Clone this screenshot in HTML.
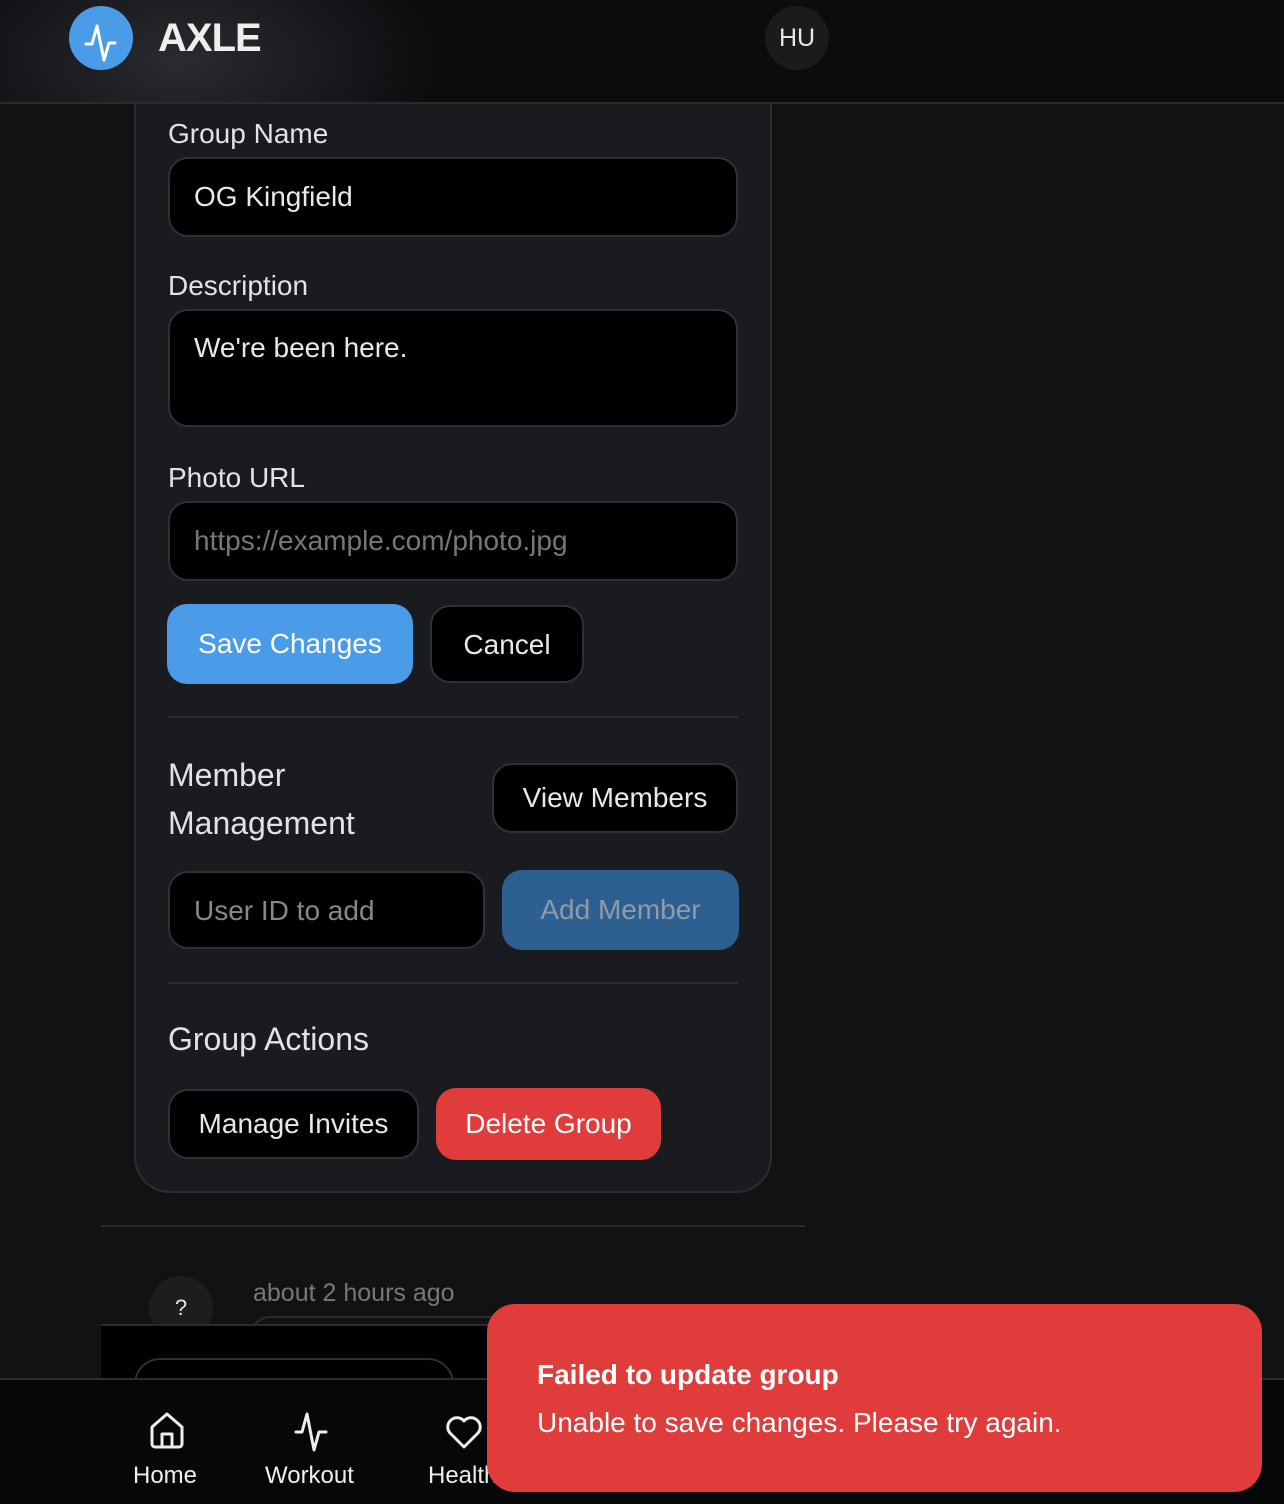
<!DOCTYPE html>
<html><head><style>
*{box-sizing:border-box;margin:0;padding:0}
body{width:1284px;height:1504px;background:#111214;font-family:"Liberation Sans","DejaVu Sans",sans-serif;color:#e8e8ea;position:relative;overflow:hidden}
.hdr{position:absolute;left:0;top:0;width:1284px;height:104px;background:radial-gradient(ellipse 260px 140px at 180px 60px,#2a2b2f,#15161a 70%,#0c0c0d);border-bottom:2px solid #2a2b2e;z-index:5}
.logo{position:absolute;left:69px;top:6px;width:64px;height:64px;border-radius:50%;background:#4a9be8;z-index:6}
.brand{position:absolute;left:158px;top:16px;font-size:40px;font-weight:bold;color:#eee;z-index:6;letter-spacing:-1px}
.hu{position:absolute;left:765px;top:6px;width:64px;height:64px;border-radius:50%;background:#1b1b1d;text-align:center;line-height:64px;font-size:25px;z-index:6}
.card{position:absolute;left:134px;top:60px;width:638px;height:1133px;background:#1a1b1f;border:2px solid #2a2c30;border-radius:36px}
.lbl{position:absolute;left:168px;font-size:28px;color:#e2e2e4}
.inp{position:absolute;left:168px;width:570px;height:80px;background:#000;border:2px solid #2e3238;border-radius:20px;font-size:28px;padding:0 24px;line-height:76px}
.btn{position:absolute;height:80px;border-radius:20px;font-size:28px;text-align:center;line-height:80px}
.hr{position:absolute;left:168px;width:570px;height:2px;background:#2b2d31}
.nav{position:absolute;left:0;top:1378px;width:1284px;height:126px;background:#060708;border-top:2px solid #2a2b2e}
.ni{position:absolute;top:1462px;font-size:24px;color:#eee}
.toast{position:absolute;left:487px;top:1304px;width:775px;height:188px;background:#e03c3c;border-radius:28px;color:#fff;z-index:8}
</style></head><body>
<div class="card"></div>
<div class="hdr"></div>
<div class="logo"><svg width="64" height="64" viewBox="0 0 64 64"><path d="M17 38h6l5-18 7 34 5-17h6" fill="none" stroke="#fff" stroke-width="3" stroke-linecap="round" stroke-linejoin="round"/></svg></div>
<div class="brand">AXLE</div>
<div class="hu">HU</div>
<div class="lbl" style="top:118px">Group Name</div>
<div class="inp" style="top:157px">OG Kingfield</div>
<div class="lbl" style="top:270px">Description</div>
<div class="inp" style="top:309px;height:118px;line-height:74px">We're been here.</div>
<div class="lbl" style="top:462px">Photo URL</div>
<div class="inp" style="top:501px;color:#777">https://example.com/photo.jpg</div>
<div class="btn" style="left:167px;top:604px;width:246px;background:#4a9be8;color:#fff">Save Changes</div>
<div class="btn" style="left:430px;top:605px;width:154px;height:78px;line-height:76px;background:#000;border:2px solid #2e3238">Cancel</div>
<div class="hr" style="top:716px"></div>
<div class="lbl" style="top:751px;font-size:32px;line-height:48px">Member<br>Management</div>
<div class="btn" style="left:492px;top:763px;width:246px;height:70px;line-height:66px;background:#000;border:2px solid #2e3238">View Members</div>
<div class="inp" style="top:871px;width:317px;color:#888;height:78px">User ID to add</div>
<div class="btn" style="left:502px;top:870px;width:237px;background:#2d5f91;color:#8d9bab">Add Member</div>
<div class="hr" style="top:982px"></div>
<div class="lbl" style="top:1021px;font-size:32px">Group Actions</div>
<div class="btn" style="left:168px;top:1089px;width:251px;height:70px;line-height:66px;background:#000;border:2px solid #2e3238">Manage Invites</div>
<div class="btn" style="left:436px;top:1088px;width:225px;height:72px;line-height:72px;background:#e03c3c;color:#fff">Delete Group</div>
<div style="position:absolute;left:101px;top:1225px;width:704px;height:2px;background:#2a2b2e"></div>
<div style="position:absolute;left:149px;top:1276px;width:64px;height:64px;border-radius:50%;background:#1d1d1f;text-align:center;line-height:64px;font-size:22px">?</div>
<div style="position:absolute;left:253px;top:1279px;font-size:25px;color:#777">about 2 hours ago</div>
<div style="position:absolute;left:250px;top:1316px;width:300px;height:20px;border:2px solid #2a2c30;border-bottom:none;border-radius:20px 20px 0 0"></div>
<div style="position:absolute;left:101px;top:1324px;width:704px;height:56px;background:#000;border-top:2px solid #2a2b2e"></div>
<div style="position:absolute;left:134px;top:1358px;width:320px;height:30px;border:2px solid #2a2f38;border-bottom:none;border-radius:26px 26px 0 0"></div>
<div class="nav"></div>
<svg style="position:absolute;left:147px;top:1410px" width="40" height="40" viewBox="0 0 40 40"><path d="M5 17L20 4l15 13v17a3 3 0 0 1-3 3H8a3 3 0 0 1-3-3z M15 37V24h10v13" fill="none" stroke="#eee" stroke-width="3" stroke-linejoin="round"/></svg>
<svg style="position:absolute;left:294px;top:1410px" width="40" height="44" viewBox="0 0 40 44"><path d="M2 22h6l5-18 7 36 5-18h7" fill="none" stroke="#eee" stroke-width="3" stroke-linecap="round" stroke-linejoin="round"/></svg>
<svg style="position:absolute;left:444px;top:1412px" width="40" height="40" viewBox="0 0 40 40"><path d="M20 35L6 21a8 8 0 0 1 14-12 8 8 0 0 1 14 12z" fill="none" stroke="#eee" stroke-width="3" stroke-linejoin="round"/></svg>
<div class="ni" style="left:133px">Home</div>
<div class="ni" style="left:265px">Workout</div>
<div class="ni" style="left:428px">Health</div>
<div class="toast">
<div style="position:absolute;left:50px;top:55px;font-size:28px;font-weight:bold">Failed to update group</div>
<div style="position:absolute;left:50px;top:103px;font-size:28px">Unable to save changes. Please try again.</div>
</div>
</body></html>
